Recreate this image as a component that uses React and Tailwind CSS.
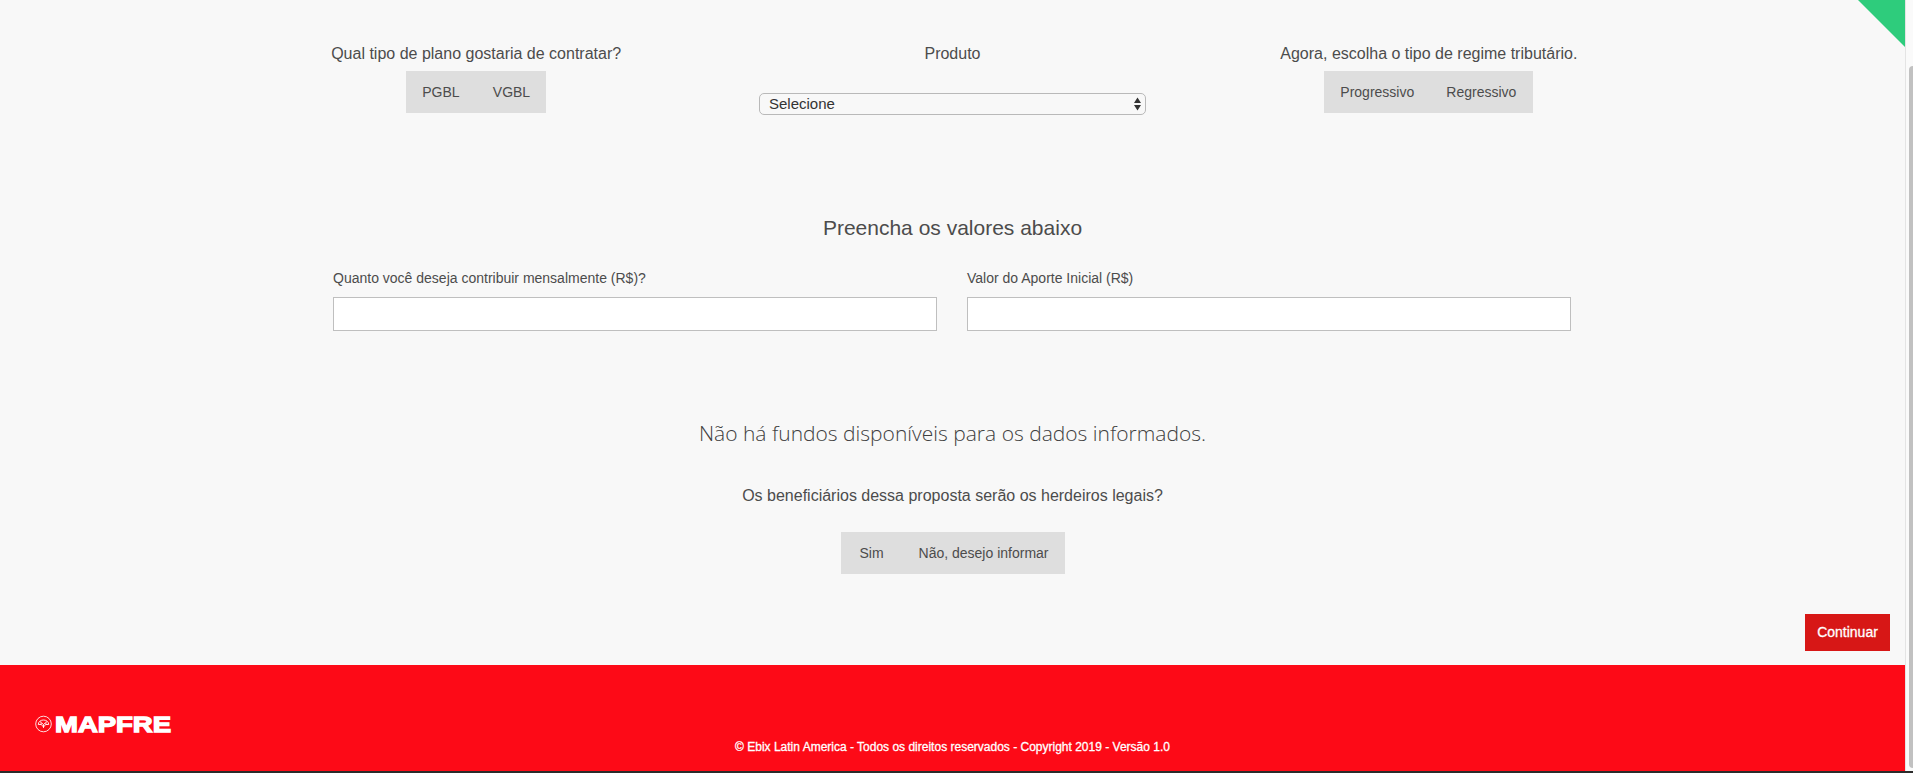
function Choice({ options, className = '' }) {
  return (
    <div className={`flex h-[42px] items-center bg-[#dedede] text-sm text-[#4c4c4c] ${className}`}>
      {options.map((o) => (
        <button key={o} type="button" className="h-full">{o}</button>
      ))}
    </div>
  );
}

function Logo() {
  return (
    <div className="flex items-center gap-[2px] text-white">
      <svg width="17" height="22" viewBox="0 0 17 22" fill="none" stroke="#fff" strokeWidth="1">
        <circle cx="8.5" cy="11" r="7.8" strokeOpacity=".85" />
        <path d="M3.300 11.500C3.500 5.500 13.500 5.500 13.700 11.500H10.700L8.500 14L6.300 11.500ZM6.300 11.500L5.800 8.500M10.700 11.500L11.200 8.500M6.500 9.800L8.500 11.500L10.500 9.800M8.500 11.500V15" strokeWidth=".9" />
      </svg>
      <svg width="124" height="32" viewBox="0 0 124 32">
        <text x="1" y="24" textLength="116" lengthAdjust="spacingAndGlyphs" fill="#fff" stroke="#fff" strokeWidth="1.300" className="font-['Liberation_Sans',sans-serif] text-[22px] font-bold">MAPFRE</text>
      </svg>
    </div>
  );
}

function Field({ label }) {
  return (
    <label className="flex w-[604px] flex-col text-sm leading-5">
      <span className="h-[29px]">{label}</span>
      <input type="text" className="h-[34px] border border-[#bfbfbf] bg-white px-3 outline-none" />
    </label>
  );
}

export default function App() {
  return (
    <div className="flex h-[773px] w-[1913px] flex-col overflow-hidden bg-[#2b2b2b] font-['Liberation_Sans',Arial,sans-serif] text-[#4c4c4c]">
      <div className="flex h-[771px]">
        <div className="relative flex w-[1905px] flex-col bg-[#f8f8f8]">
          <svg className="absolute right-0 top-0" width="47" height="47" viewBox="0 0 47 47">
            <path d="M0 0H47V47Z" fill="#2ecc7c" />
          </svg>
          <main className="flex h-[665px] flex-col items-center pt-[43px]">
            <section className="grid h-[172px] w-[1429px] grid-cols-3">
              <div className="flex flex-col items-center">
                <p className="h-7 text-base leading-[21px]">Qual tipo de plano gostaria de contratar?</p>
                <Choice options={['PGBL', 'VGBL']} className="w-[140px] justify-between px-4" />
              </div>
              <div className="flex flex-col items-center">
                <p className="h-[50px] text-base leading-[21px]">Produto</p>
                <div className="flex h-[22px] w-[387px] items-center justify-between rounded-[5px] border border-[#b9b9b9] pl-[9px] pr-1 text-[15px] text-[#333]">
                  <span>Selecione</span>
                  <svg width="7" height="14" viewBox="0 0 7 14" fill="#333">
                    <path d="M3.500 0.500L7 6H0Z M0 8H7L3.500 13.500Z" />
                  </svg>
                </div>
              </div>
              <div className="flex flex-col items-center">
                <p className="h-7 text-base leading-[21px]">Agora, escolha o tipo de regime tributário.</p>
                <Choice options={['Progressivo', 'Regressivo']} className="w-[209px] justify-between pl-4 pr-[17px]" />
              </div>
            </section>
            <section className="flex w-[1239px] flex-col items-center">
              <h2 className="h-[53px] text-[21px] leading-[26px]">Preencha os valores abaixo</h2>
              <div className="flex w-full gap-[30px]">
                <Field label="Quanto você deseja contribuir mensalmente (R$)?" />
                <Field label="Valor do Aporte Inicial (R$)" />
              </div>
            </section>
            <p className="mt-[87px] font-['Open_Sans',sans-serif] text-[21px] font-light leading-[30px] text-[#404040]">Não há fundos disponíveis para os dados informados.</p>
            <p className="mt-[38px] text-base leading-5">Os beneficiários dessa proposta serão os herdeiros legais?</p>
            <Choice options={['Sim', 'Não, desejo informar']} className="mt-[26px] w-[224px] shrink-0 justify-between pl-[19px] pr-4" />
            <button type="button" className="mr-[15px] mt-10 h-[37px] w-[85px] self-end bg-[#d71716] pb-0.5 text-sm text-white [-webkit-text-stroke:0.3px]">Continuar</button>
          </main>
          <footer className="flex h-[106px] flex-col bg-[#fd0a17] pl-[35px] pt-[43px]">
            <Logo />
            <p className="-mt-px w-full pr-[35px] text-center text-xs leading-4 text-white [-webkit-text-stroke:0.3px]">© Ebix Latin America - Todos os direitos reservados - Copyright 2019 - Versão 1.0</p>
          </footer>
        </div>
        <div className="flex w-2 justify-end border-l border-[#e4e4e4] bg-[#fafafa] pt-[66px]">
          <div className="h-[702px] w-1 rounded-l bg-[#c1c1c1]" />
        </div>
      </div>
    </div>
  );
}
